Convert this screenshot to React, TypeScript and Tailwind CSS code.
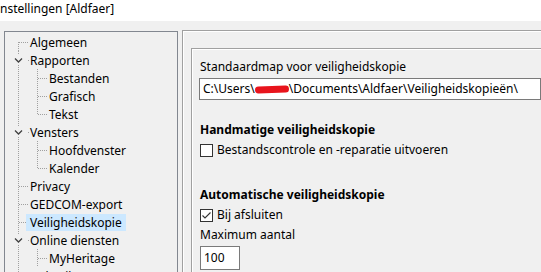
import React from "react";

type Row = {
  label: string;
  level: 0 | 1;
  expand?: boolean;
  first?: boolean;
  childTop?: boolean;
  childLast?: boolean;
  selected?: boolean;
};

const rows: Row[] = [
  { label: "Algemeen", level: 0, first: true },
  { label: "Rapporten", level: 0, expand: true },
  { label: "Bestanden", level: 1, childTop: true },
  { label: "Grafisch", level: 1 },
  { label: "Tekst", level: 1, childLast: true },
  { label: "Vensters", level: 0, expand: true },
  { label: "Hoofdvenster", level: 1, childTop: true },
  { label: "Kalender", level: 1, childLast: true },
  { label: "Privacy", level: 0 },
  { label: "GEDCOM-export", level: 0 },
  { label: "Veiligheidskopie", level: 0, selected: true },
  { label: "Online diensten", level: 0, expand: true },
  { label: "MyHeritage", level: 1, childTop: true },
  { label: "Gebruikers", level: 0 },
];

function Connector({ row }: { row: Row }) {
  const dot = { stroke: "#a0a0a0", strokeWidth: 1, strokeDasharray: "1 1" };
  const w = row.level === 0 ? 21 : 40;
  return (
    <svg width={w} height={18} className="shrink-0 overflow-visible">
      <line x1={13.5} y1={row.first ? 9 : 0} x2={13.5} y2={18} {...dot} />
      {row.level === 0 ? (
        <line x1={row.expand ? 23 : 14} y1={9.5} x2={24} y2={9.5} {...dot} />
      ) : (
        <>
          <line x1={32.5} y1={0} x2={32.5} y2={row.childLast ? 9 : 18} {...dot} />
          <line x1={33} y1={9.5} x2={43} y2={9.5} {...dot} />
        </>
      )}
      {row.expand && (
        <>
          <rect x={9} y={4} width={10} height={10} fill="#f0f0f0" />
          <polyline points="10,7.5 13.5,11 17,7.5" fill="none" stroke="#404040" strokeWidth={1.3} />
        </>
      )}
    </svg>
  );
}

function Checkbox({ checked }: { checked?: boolean }) {
  return (
    <span className="w-[13px] h-[13px] border border-[#333333] bg-white shrink-0 flex items-center justify-center">
      {checked && (
        <svg width="11" height="11" viewBox="0 0 11 11">
          <polyline points="1.5,5.5 4,8 9.5,2.5" fill="none" stroke="#333333" strokeWidth={1.1} />
        </svg>
      )}
    </span>
  );
}

export default function App() {
  return (
    <div
      className="w-[541px] h-[272px] overflow-hidden bg-[#f0f0f0] text-[12px] text-black flex flex-col"
      style={{ fontFamily: '"Noto Sans", "Open Sans", sans-serif' }}
    >
      <div className="h-[21px] bg-white leading-[18px] shrink-0">nstellingen [Aldfaer]</div>
      <div className="flex pt-[10px] pl-[4px] gap-[4px] flex-1 min-h-0">
        <div className="w-[174px] shrink-0 border border-[#828790] pt-[1px] h-[260px]">
          {rows.map((r) => (
            <div key={r.label} className="flex h-[18px] items-center">
              <Connector row={r} />
              <span
                className={`px-[4px] h-[17px] leading-[17px] whitespace-nowrap ${
                  r.selected ? "bg-[#cce8ff]" : ""
                }`}
              >
                {r.label}
              </span>
            </div>
          ))}
        </div>
        <div className="flex-1 border-t border-l border-[#a0a0a0] -mt-[1px] shadow-[inset_1px_1px_0_#ffffff] pl-[8px] pt-[17px]">
          <div className="h-[260px] border-t border-l border-[#a0a0a0] shadow-[inset_1px_1px_0_#ffffff] pl-[7px] pt-[9px]">
            <div className="leading-[18px] pl-[1px]">Standaardmap voor veiligheidskopie</div>
            <div className="mt-[2px] h-[22px] border border-[#7a7a7a] bg-white pl-[3px] leading-[20px] whitespace-nowrap flex items-center">
              <span>C:\Users\</span>
              <span className="inline-block w-[34px] h-[7px] bg-[#e8141c] rounded-full -rotate-2" />
              <span>\Documents\Aldfaer\Veiligheidskopieën\</span>
            </div>
            <div className="mt-[21px] font-bold leading-[18px] pl-[1px]">Handmatige veiligheidskopie</div>
            <div className="mt-[2px] flex items-center gap-[4px] h-[18px] pl-[1px]">
              <Checkbox />
              <span>Bestandscontrole en -reparatie uitvoeren</span>
            </div>
            <div className="mt-[27px] font-bold leading-[18px] pl-[1px]">Automatische veiligheidskopie</div>
            <div className="mt-[2px] flex items-center gap-[4px] h-[18px] pl-[1px]">
              <Checkbox checked />
              <span>Bij afsluiten</span>
            </div>
            <div className="mt-[2px] leading-[18px] pl-[1px]">Maximum aantal</div>
            <div className="mt-[2px] ml-[1px] w-[40px] h-[24px] border border-[#7a7a7a] bg-white pl-[3px] leading-[22px]">
              100
            </div>
          </div>
        </div>
      </div>
    </div>
  );
}
